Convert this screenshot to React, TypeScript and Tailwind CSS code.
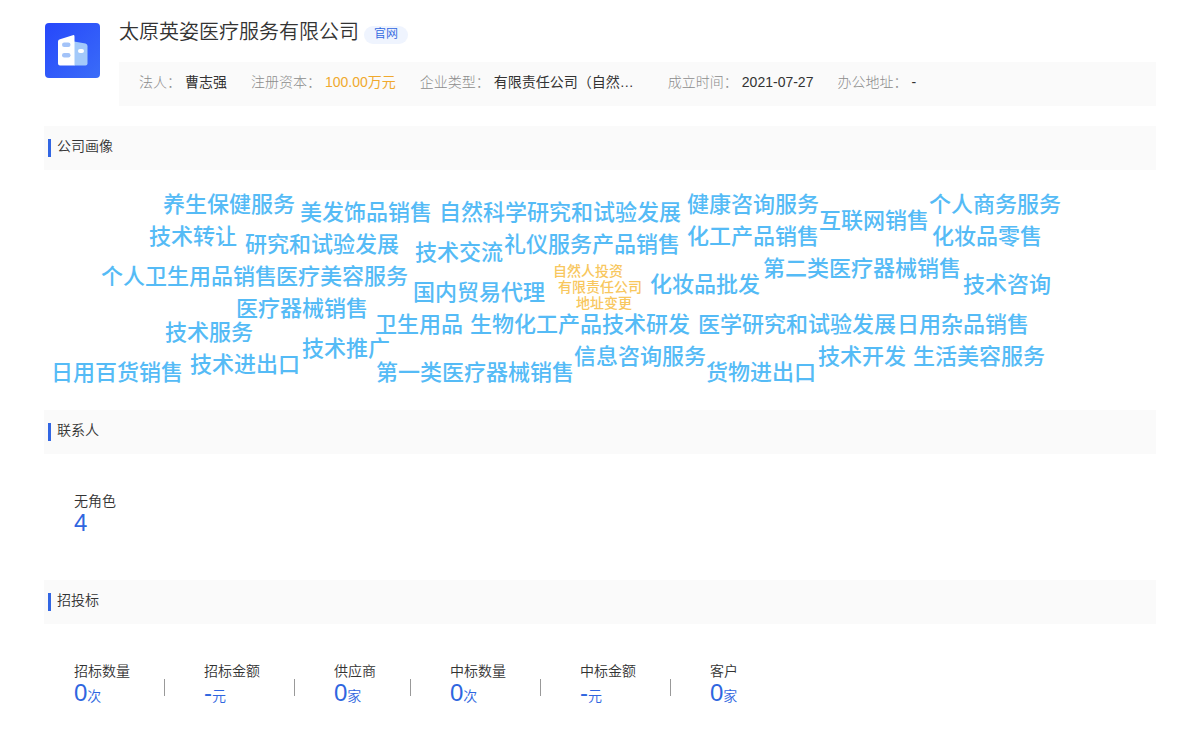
import type { ReactNode } from "react";

interface Word {
  text: string;
  // offset of the word's top left corner from the top centre of the cloud
  x: number;
  y: number;
  minor?: boolean;
}

const words: Word[] = [
  { text: "养生保健服务", x: -437, y: 23 },
  { text: "美发饰品销售", x: -300, y: 31 },
  { text: "自然科学研究和试验发展", x: -161, y: 31 },
  { text: "健康咨询服务", x: 87, y: 23 },
  { text: "互联网销售", x: 219, y: 39 },
  { text: "个人商务服务", x: 329, y: 23 },
  { text: "技术转让", x: -451, y: 55 },
  { text: "研究和试验发展", x: -355, y: 63 },
  { text: "技术交流", x: -185, y: 71 },
  { text: "礼仪服务产品销售", x: -96, y: 63 },
  { text: "化工产品销售", x: 87, y: 55 },
  { text: "化妆品零售", x: 332, y: 55 },
  { text: "个人卫生用品销售", x: -499, y: 95 },
  { text: "医疗美容服务", x: -324, y: 95 },
  { text: "国内贸易代理", x: -187, y: 111 },
  { text: "化妆品批发", x: 50, y: 103 },
  { text: "第二类医疗器械销售", x: 163, y: 87 },
  { text: "技术咨询", x: 363, y: 103 },
  { text: "医疗器械销售", x: -364, y: 127 },
  { text: "卫生用品", x: -225, y: 143 },
  { text: "生物化工产品技术研发", x: -130, y: 143 },
  { text: "医学研究和试验发展", x: 98, y: 143 },
  { text: "日用杂品销售", x: 297, y: 143 },
  { text: "技术服务", x: -435, y: 151 },
  { text: "技术推广", x: -298, y: 167 },
  { text: "信息咨询服务", x: -26, y: 175 },
  { text: "技术开发", x: 218, y: 175 },
  { text: "生活美容服务", x: 313, y: 175 },
  { text: "技术进出口", x: -410, y: 183 },
  { text: "日用百货销售", x: -549, y: 191 },
  { text: "第一类医疗器械销售", x: -224, y: 191 },
  { text: "货物进出口", x: 106, y: 191 },
  { text: "自然人投资", x: -47, y: 93, minor: true },
  { text: "有限责任公司", x: -42, y: 109, minor: true },
  { text: "地址变更", x: -24, y: 125, minor: true },
];

const bids = [
  { label: "招标数量", value: "0", unit: "次" },
  { label: "招标金额", value: "-", unit: "元" },
  { label: "供应商", value: "0", unit: "家" },
  { label: "中标数量", value: "0", unit: "次" },
  { label: "中标金额", value: "-", unit: "元" },
  { label: "客户", value: "0", unit: "家" },
];

function CompanyLogo() {
  return (
    <svg viewBox="0 0 55 55" className="mt-px ml-px size-[55px] shrink-0" aria-hidden="true">
      <defs>
        <linearGradient id="logoBg" x1="0" y1="0" x2="1" y2="1">
          <stop offset="0" stopColor="#2647fb" />
          <stop offset="1" stopColor="#3a6cf8" />
        </linearGradient>
      </defs>
      <rect width="55" height="55" rx="4" fill="url(#logoBg)" />
      <path d="M29 18.500 40.500 20.500Q42.500 21 42.500 23V40.500Q42.500 42.500 40.500 42.500H29Z" fill="#a3c9fa" />
      <path d="M15 16.200 27.800 12.200Q29.500 11.800 29.500 13.500V42.500H15Q13 42.500 13 40.500V18.500Q13 16.700 15 16.200Z" fill="#fff" />
      <rect x="17" y="19.500" width="8.500" height="4.500" rx="2.200" fill="#a3c3f8" />
      <rect x="17" y="30" width="8.500" height="4.500" rx="2.200" fill="#a3c3f8" />
      <rect x="33" y="26" width="6" height="4" rx="2" fill="#fff" />
    </svg>
  );
}

function Fact({ label, className = "", children }: { label: string; className?: string; children: ReactNode }) {
  return (
    <div className="flex shrink-0 gap-1">
      <dt className="font-light text-[#8c8c8c]">{label}：</dt>
      <dd className={className || "text-[#333]"}>{children}</dd>
    </div>
  );
}

function SectionTitle({ children }: { children: ReactNode }) {
  return (
    <div className="flex h-11 items-center gap-1.5 bg-[#fafafa] pl-1">
      <span className="h-[18px] w-[3px] bg-[#3266e3]" />
      <h2 className="pb-1 text-sm font-[350] text-[#333]">{children}</h2>
    </div>
  );
}

function Stat({ label, value, unit }: { label: string; value: string; unit?: string }) {
  return (
    <div>
      <dt className="text-sm leading-5 font-[350] text-[#333]">{label}</dt>
      <dd className="text-2xl leading-6 text-[#2f66e0]">
        {value}
        {unit && <span className="text-sm leading-6 font-[350]">{unit}</span>}
      </dd>
    </div>
  );
}

export default function App() {
  return (
    <main className="bg-white px-11 pt-[22px] pb-10 font-['Liberation_Sans','Noto_Sans_CJK_SC',sans-serif]">
      <header className="flex gap-[19px]">
        <CompanyLogo />
        <div className="min-w-0 flex-1">
          <div className="flex h-10 items-start gap-[5px]">
            <h1 className="-mt-1 text-xl leading-7 font-[350] text-[#333]">太原英姿医疗服务有限公司</h1>
            <a href="#site" className="mt-1 h-[18px] rounded-full bg-[#eff4fe] px-2.5 text-xs leading-4 font-[350] text-[#2f66e0]">
              官网
            </a>
          </div>
          <dl className="flex h-11 gap-6 bg-[#fafafa] px-5 pt-2.5 text-sm leading-5">
            <Fact label="法人">曹志强</Fact>
            <Fact label="注册资本" className="text-[#f0a92e]">100.00万元</Fact>
            <Fact label="企业类型" className="w-[150px] text-[#333]">有限责任公司（自然…</Fact>
            <Fact label="成立时间">2021-07-27</Fact>
            <Fact label="办公地址">-</Fact>
          </dl>
        </div>
      </header>

      <section className="mt-5">
        <SectionTitle>公司画像</SectionTitle>
        <div className="relative h-60 overflow-hidden">
          {words.map(({ text, x, y, minor }) => (
            <span
              key={text}
              className={`absolute font-medium whitespace-nowrap ${
                minor ? "text-sm leading-4 text-[#f8c75e]" : "text-[22px] leading-6 text-[#55bbf6]"
              }`}
              style={{ left: `calc(50% + ${x}px)`, top: y }}
            >
              {text}
            </span>
          ))}
        </div>
      </section>

      <section>
        <SectionTitle>联系人</SectionTitle>
        <dl className="h-[126px] px-[30px] pt-[37px]">
          <Stat label="无角色" value="4" />
        </dl>
      </section>

      <section>
        <SectionTitle>招投标</SectionTitle>
        <div className="flex flex-wrap px-[30px] pt-[37px]">
          {bids.map((bid, i) => (
            <div key={bid.label} className="flex">
              {i > 0 && <span className="mt-[18px] mr-[39px] ml-[34px] h-[17px] w-px bg-[#999]" />}
              <dl>
                <Stat {...bid} />
              </dl>
            </div>
          ))}
        </div>
      </section>
    </main>
  );
}
